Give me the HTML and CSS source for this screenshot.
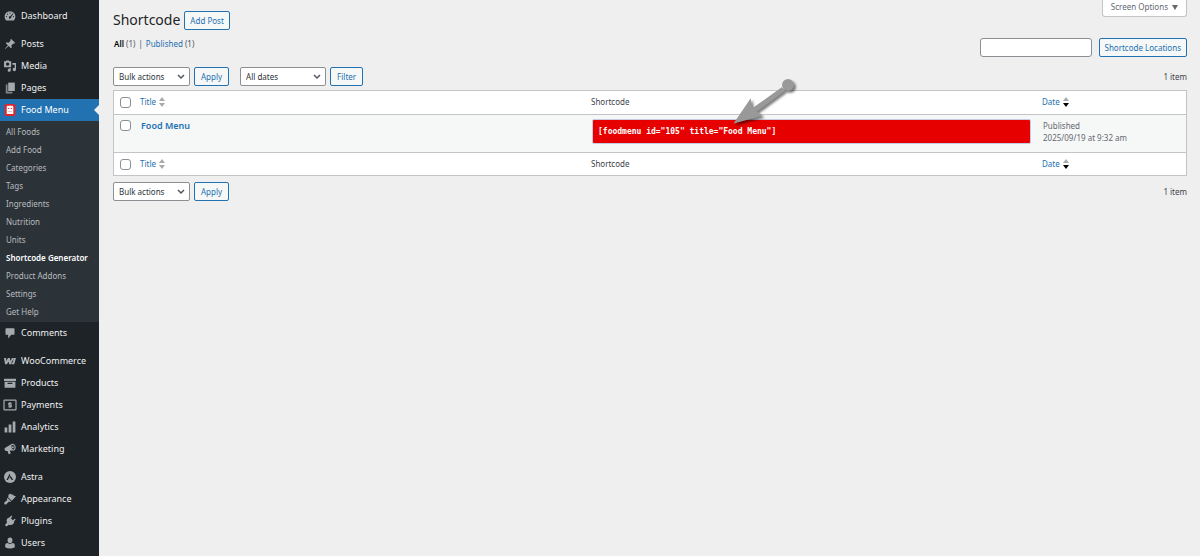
FILE: index.html
```html
<!DOCTYPE html>
<html lang="en">
<head>
<meta charset="utf-8">
<title>Shortcode</title>
<link rel="stylesheet" href="styles.css">
</head>
<body>
<div class="admin">
  <nav class="sidebar" aria-label="Main menu">
    <ul class="menu">
      <li><a class="menu-link" href="#"><svg class="icon" viewBox="0 0 20 20"><path fill-rule="evenodd" d="M3.800 17.500h12.400A9 9 0 1 0 3.800 17.500zM10 4.200a1 1 0 1 1 0 2 1 1 0 0 1 0-2zM5.900 6a1 1 0 1 1 0 2 1 1 0 0 1 0-2zm8.900-.6.9.8-3.800 5.300a2 2 0 1 1-1.400-1.100zM4.200 10a1 1 0 1 1 0 2 1 1 0 0 1 0-2zm11.600 0a1 1 0 1 1 0 2 1 1 0 0 1 0-2z"/></svg>Dashboard</a></li>
    </ul>
    <ul class="menu">
      <li><a class="menu-link" href="#"><svg class="icon" viewBox="0 0 20 20"><path d="M10.400 3 12 1.500 18.500 8 17 9.600l-1.500-.3-3.200 3.200.7 3.200-1.500 1.500-3.700-3.700L2 18.500l-.5-.5 5-5.800L3 8.700l1.500-1.500 3.200.7 3.200-3.200z"/></svg>Posts</a></li>
      <li><a class="menu-link" href="#"><svg class="icon" viewBox="0 0 20 20"><path fill-rule="evenodd" d="M0 2h3l1-1h4l1 1h3v10H0zM6 4a2.800 2.800 0 1 0 0 5.600A2.800 2.800 0 0 0 6 4zM14 5h6v11a2.800 2.800 0 1 1-2.300-2.800V8H14zM9 13.500h2.300V17a2.600 2.600 0 1 1-2.300-2.500z"/></svg>Media</a></li>
      <li><a class="menu-link" href="#"><svg class="icon" viewBox="0 0 20 20"><path d="M7 1h11v14H7z"/><path d="M3 4h2.800v12.200H14V19H3z" opacity=".75"/></svg>Pages</a></li>
      <li><a class="menu-link is-current" href="#" aria-current="true"><svg class="icon" viewBox="0 0 20 20"><rect x="1" y="0" width="18" height="20" rx="3" fill="#e5242b"/><path fill="#fff" d="M4.500 5c0-2 2-3 3.300-1.500C9 2 11 2 12.200 3.500c1.300-1.500 3.300-.5 3.300 1.500v11.500h-11z"/><path fill="#e5242b" d="M7 6.500h1.800v2H7zm4.200 0H13v2h-1.800z"/><path fill="#b7a69f" d="M7 12h6v1H7z"/></svg>Food Menu</a>
        <ul class="submenu">
          <li><a href="#">All Foods</a></li>
          <li><a href="#">Add Food</a></li>
          <li><a href="#">Categories</a></li>
          <li><a href="#">Tags</a></li>
          <li><a href="#">Ingredients</a></li>
          <li><a href="#">Nutrition</a></li>
          <li><a href="#">Units</a></li>
          <li><a class="is-active" href="#" aria-current="page">Shortcode Generator</a></li>
          <li><a href="#">Product Addons</a></li>
          <li><a href="#">Settings</a></li>
          <li><a href="#">Get Help</a></li>
        </ul>
      </li>
      <li><a class="menu-link" href="#"><svg class="icon" viewBox="0 0 20 20"><path d="M4 2h12q1.500 0 1.500 1.500v8Q17.500 13 16 13h-4l-5 6v-6H4q-1.500 0-1.500-1.500v-8Q2.500 2 4 2z"/></svg>Comments</a></li>
    </ul>
    <ul class="menu">
      <li><a class="menu-link" href="#"><svg class="icon" viewBox="0 0 20 20"><path d="M0 5h3.600l.2 5.200L6.700 5h3.200l.7 5.200L13.300 5h3.200l-5.300 10.500H8.500l-.8-4.700-2.900 4.700H1.700z"/><path d="M16 5h4l-3 10.500h-5l1.200-3h1.500z"/></svg>WooCommerce</a></li>
      <li><a class="menu-link" href="#"><svg class="icon" viewBox="0 0 20 20"><path fill-rule="evenodd" d="M0 3h20v3.500H0zM1 8h18v10H1zm5 1.500v2h8v-2z"/></svg>Products</a></li>
      <li><a class="menu-link" href="#"><svg class="icon" viewBox="0 0 20 20"><rect x="0" y="2" width="20" height="16" rx="1" fill="none" stroke="currentColor" stroke-width="2"/><path d="M13 7H8v3h4.200v3H7M10 5v10" fill="none" stroke="currentColor" stroke-width="1.800"/></svg>Payments</a></li>
      <li><a class="menu-link" href="#"><svg class="icon" viewBox="0 0 20 20"><path d="M1 11h4.500v8H1zm6.700-5h4.600v13H7.700zm6.800-5H19v18h-4.500z"/></svg>Analytics</a></li>
      <li><a class="menu-link" href="#"><svg class="icon" viewBox="0 0 20 20"><path fill-rule="evenodd" d="M1.500 8.500 12 2c3-2.500 7.500 1 7.500 5s-3 6.500-5 5.500l-4.700-.2 1.400 5.400-3.400 1.100-2-5.600C2 14.500-.5 10.500 1.500 8.500zM13.200 3.500c-1.500 1-.5 7 2 7.500 3 0 3.500-7.500-.2-7.700z"/><circle cx="14.700" cy="7" r="1.700"/></svg>Marketing</a></li>
    </ul>
    <ul class="menu">
      <li><a class="menu-link" href="#"><svg class="icon" viewBox="0 0 20 20"><circle cx="10" cy="10" r="10"/><path fill="#1d2327" d="M9.600 4 4 15h2.500l3.900-7.700zm1.500 4-2 4h2.300l1.200 3h2.700z"/></svg>Astra</a></li>
      <li><a class="menu-link" href="#"><svg class="icon" viewBox="0 0 20 20"><path d="m7.500 3 3-2 2.500 2 2-.5 1.500 2 3.500 1-7 7.500-6-5.500zM6 8.500l5.800 5.200L10.300 15l-2-1L3.500 19l-3-.2L.5 16 5.500 11.500l-1-1.800z"/></svg>Appearance</a></li>
      <li><a class="menu-link" href="#"><svg class="icon" viewBox="0 0 20 20"><path d="m12.500 1 1.400 1.400-2.500 3.100 3.300 3.300 3.300-2.700 1.400 1.400-3.100 3.200 1 1-2 3.500c-2 2-5 2-7 1L4 19l-2.500-2.500 3.700-3.800c-1.500-2.700-1-5.700 1-7.200l2.500-1.300z"/></svg>Plugins</a></li>
      <li><a class="menu-link" href="#"><svg class="icon" viewBox="0 0 20 20"><ellipse cx="10" cy="5.500" rx="4" ry="4.800"/><path d="M2 14q0-4 4.500-4 3.500 3 7 0Q18 10 18 14v3q-8 4-16 0z"/></svg>Users</a></li>
    </ul>
  </nav>

  <main class="content">
    <div class="topbar">
      <div class="page-title">
        <h1>Shortcode</h1>
        <a class="button button-compact" href="#">Add Post</a>
      </div>
      <button class="screen-options" type="button">Screen Options <span class="caret" aria-hidden="true"></span></button>
    </div>

    <div class="filters">
      <ul class="views">
        <li><a class="view-all" href="#">All</a> (1)</li>
        <li><a href="#">Published</a> (1)</li>
      </ul>
      <form class="search">
        <input class="search-box" type="search" aria-label="Shortcode Locations">
        <button class="button button-compact" type="submit">Shortcode Locations</button>
      </form>
    </div>

    <div class="tablenav">
      <select class="select" aria-label="Select bulk action"><option>Bulk actions</option></select>
      <button class="button" type="button">Apply</button>
      <select class="select select-dates" aria-label="Filter by date"><option>All dates</option></select>
      <button class="button" type="button">Filter</button>
      <span class="count">1 item</span>
    </div>

    <table class="list">
      <colgroup><col class="col-check"><col><col><col class="col-date"></colgroup>
      <thead>
        <tr>
          <td><input class="check" type="checkbox" aria-label="Select all"></td>
          <th scope="col"><a class="sort" href="#">Title <svg class="sorter" viewBox="0 0 6 10"><path fill="#a7aaad" d="M3 0l3 4H0zM0 6h6L3 10z"/></svg></a></th>
          <th scope="col">Shortcode</th>
          <th scope="col"><a class="sort" href="#">Date <svg class="sorter" viewBox="0 0 6 10"><path fill="#a7aaad" d="M3 0l3 4H0z"/><path d="M0 6h6L3 10z"/></svg></a></th>
        </tr>
      </thead>
      <tbody>
        <tr>
          <td><input class="check" type="checkbox" aria-label="Select Food Menu"></td>
          <td><a class="row-title" href="#">Food Menu</a></td>
          <td class="code-cell">
            <div class="code-wrap">
              <input class="code" type="text" readonly aria-label="Shortcode" value="[foodmenu id=&quot;105&quot; title=&quot;Food Menu&quot;]">
              <svg class="pointer" viewBox="0 0 70 55" aria-hidden="true"><path d="M6.500 49.500 23.700 24.300l1.600 10L54.700 13.300l3.300 3.400-28.300 21 6 4z"/><circle cx="61" cy="11" r="6"/></svg>
            </div>
          </td>
          <td class="date">Published<br>2025/09/19 at 9:32 am</td>
        </tr>
      </tbody>
      <tfoot>
        <tr>
          <td><input class="check" type="checkbox" aria-label="Select all"></td>
          <th scope="col"><a class="sort" href="#">Title <svg class="sorter" viewBox="0 0 6 10"><path fill="#a7aaad" d="M3 0l3 4H0zM0 6h6L3 10z"/></svg></a></th>
          <th scope="col">Shortcode</th>
          <th scope="col"><a class="sort" href="#">Date <svg class="sorter" viewBox="0 0 6 10"><path fill="#a7aaad" d="M3 0l3 4H0z"/><path d="M0 6h6L3 10z"/></svg></a></th>
        </tr>
      </tfoot>
    </table>

    <div class="tablenav tablenav-bottom">
      <select class="select" aria-label="Select bulk action"><option>Bulk actions</option></select>
      <button class="button" type="button">Apply</button>
      <span class="count">1 item</span>
    </div>
  </main>
</div>
</body>
</html>
```
FILE: styles.css
```css
* { box-sizing: border-box; }

body {
  margin: 0;
  background: #efefef;
  color: #3c434a;
  font: 8px/12px "Segoe UI", "Noto Sans", "Open Sans", sans-serif;
}

a { color: #2271b1; text-decoration: none; }
ul { margin: 0; padding: 0; list-style: none; }
button, input, select { margin: 0; font: inherit; }

.admin { display: flex; min-height: 100vh; }

/* Sidebar */
.sidebar {
  display: flex;
  flex: none;
  flex-direction: column;
  gap: 6px;
  width: 99px;
  height: 100vh;
  padding-top: 5px;
  overflow: hidden;
  background: #1d2327;
}

.menu-link {
  position: relative;
  display: flex;
  align-items: center;
  gap: 5px;
  height: 22px;
  padding-left: 4px;
  color: #f0f0f1;
  font-size: 9px;
}

.icon { width: 12px; height: 12px; color: #a7aaad; fill: currentColor; overflow: visible; }
.is-current { background: #2271b1; color: #fff; }

.is-current::after {
  position: absolute;
  top: 6px;
  right: 0;
  border: 5px solid transparent;
  border-left: 0;
  border-right-color: #efefef;
  content: "";
}

.submenu { padding: 2px 0 1px; background: #2c3338; }
.submenu a { display: block; padding-left: 6px; color: #b8bbbf; line-height: 18px; white-space: nowrap; }
.submenu .is-active { color: #fff; font-weight: 600; }

/* Page header */
.content { flex: 1; min-width: 0; padding: 0 13px 0 14px; }
.topbar { display: flex; align-items: flex-start; justify-content: space-between; }
.page-title { display: flex; align-items: center; gap: 4px; padding-top: 10px; }
h1 { margin: 0; color: #1d2327; font-size: 14px; font-weight: 400; line-height: 20px; }

.button {
  height: 19px;
  padding: 0 6px;
  border: 1px solid #2271b1;
  border-radius: 2px;
  background: #f6f7f7;
  color: #2271b1;
  line-height: 17px;
  white-space: nowrap;
}

.button-compact { padding: 0 5px; }

.screen-options {
  display: flex;
  align-items: center;
  gap: 4px;
  height: 17px;
  padding: 0 8px 2px;
  border: 1px solid #c3c4c7;
  border-top: 0;
  border-radius: 0 0 3px 3px;
  background: #fff;
  color: #646970;
}

.caret { border: 3px solid transparent; border-top: 5px solid #646970; border-bottom: 0; }

.filters { display: flex; align-items: flex-start; justify-content: space-between; padding-top: 8px; }
.views { display: flex; padding: 0 1px; color: #50575e; }
.views li + li::before { margin: 0 3px; content: "|"; }
.view-all { color: #000; font-weight: 600; }
.search { display: flex; gap: 7px; }

.search-box {
  width: 112px;
  height: 19px;
  border: 1px solid #8c8f94;
  border-radius: 3px;
  background: #fff;
  appearance: none;
}

/* Table controls */
.tablenav { display: flex; align-items: center; gap: 4px; padding: 10px 0 4px; }
.tablenav-bottom { padding-top: 6px; }

.select {
  width: 77px;
  height: 19px;
  padding: 0 14px 0 5px;
  border: 1px solid #8c8f94;
  border-radius: 2px;
  background: #fff url("data:image/svg+xml,%3Csvg xmlns='http://www.w3.org/2000/svg' viewBox='0 0 8 6'%3E%3Cpath d='M1 1l3 3 3-3' fill='none' stroke='%2350575e' stroke-width='1.500'/%3E%3C/svg%3E") no-repeat right 4px center / 8px 6px;
  color: #2c3338;
  appearance: none;
}

.select-dates { width: 86px; margin-left: 7px; }
.count { margin-left: auto; }

/* List table */
.list {
  width: 100%;
  border: 1px solid #c3c4c7;
  border-spacing: 0;
  background: #fff;
  table-layout: fixed;
}

.col-check { width: 20px; }
.col-date { width: 150px; }
.list td, .list th { padding: 5px 5px 5px 6px; font-weight: 400; text-align: left; vertical-align: middle; }
.list thead td, .list thead th { padding-bottom: 6px; border-bottom: 1px solid #c3c4c7; }
.list tfoot td, .list tfoot th { border-top: 1px solid #c3c4c7; }
.list tbody td { background: #f6f7f7; vertical-align: top; }

.check {
  display: block;
  width: 11px;
  height: 11px;
  border: 1px solid #8c8f94;
  border-radius: 3px;
  background: #fff;
  appearance: none;
}

.sort { display: flex; align-items: center; gap: 3px; }
.sorter { width: 6px; height: 10px; }
.row-title { padding-left: 1px; font-size: 9px; font-weight: 600; }
.list .date { padding-left: 7px; color: #646970; }
.list .code-cell { padding-top: 4px; padding-left: 7px; }
.code-wrap { position: relative; padding-bottom: 3px; }

.code {
  display: block;
  width: 100%;
  height: 25px;
  padding: 0 5px;
  border: 1px solid #c5cbe0;
  border-radius: 2px;
  background: #e60000;
  color: #fff;
  font: bold 8px/12px Consolas, "DejaVu Sans Mono", monospace;
}

.pointer {
  position: absolute;
  bottom: 18px;
  left: 135px;
  width: 70px;
  height: 55px;
  fill: #999;
  filter: drop-shadow(2px 2px 1px rgba(0, 0, 0, .5));
  pointer-events: none;
}
```
